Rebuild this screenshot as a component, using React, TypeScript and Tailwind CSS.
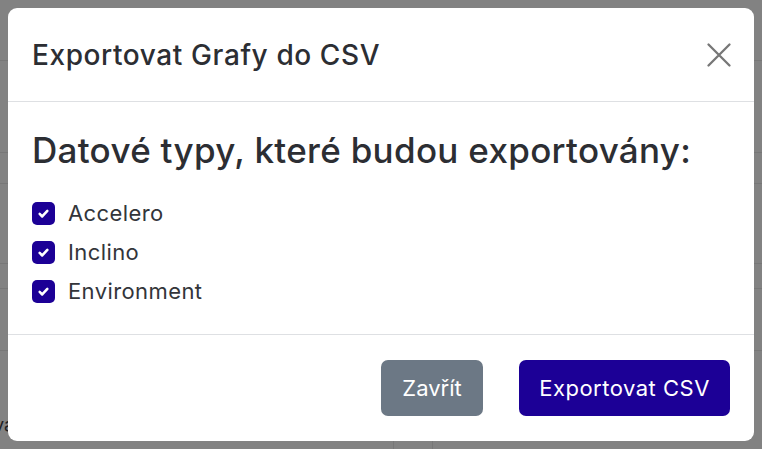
import React, { useState } from 'react';

const types = ['Accelero', 'Inclino', 'Environment'];

function Check({ on }: { on: boolean }) {
  return (
    <span className={`flex h-[23px] w-[23px] items-center justify-center rounded-[5px] ${on ? 'bg-[#1c0096]' : 'border border-gray-400 bg-white'}`}>
      {on && (
        <svg viewBox="0 0 20 20" className="h-[17px] w-[17px]" fill="none" stroke="white" strokeWidth="3" strokeLinecap="round" strokeLinejoin="round">
          <path d="M5.5 10.5l3 3 6-6.5" />
        </svg>
      )}
    </span>
  );
}

export default function App() {
  const [checked, setChecked] = useState<Record<string, boolean>>({ Accelero: true, Inclino: true, Environment: true });

  return (
    <div className="relative h-[449px] w-[762px] overflow-hidden bg-[#828282]" style={{ fontFamily: 'Inter, "Noto Sans", sans-serif' }}>
      {/* page behind the backdrop */}
      <div className="absolute inset-0 pointer-events-none">
        <div className="absolute left-0 right-0 top-[60px] h-px bg-[#777]" />
        <div className="absolute left-0 right-0 top-[152px] h-px bg-[#777]" />
        <div className="absolute left-0 right-0 top-[183px] h-px bg-[#777]" />
        <div className="absolute left-0 right-0 top-[263px] h-px bg-[#777]" />
        <div className="absolute left-0 right-0 top-[288px] h-px bg-[#777]" />
        <div className="absolute left-0 right-0 top-[350px] h-px bg-[#777]" />
        <div className="absolute bottom-0 left-[393px] h-[20px] w-px bg-[#777]" />
        <div className="absolute bottom-0 left-[432px] h-[20px] w-px bg-[#777]" />
        <span className="absolute left-[-6px] top-[411px] text-[18px] text-[#1e1e24]">va</span>
      </div>

      <div className="absolute left-[8px] top-[8px] flex h-[433px] w-[746px] flex-col rounded-[9px] bg-white text-[#2c2e33]">
        <div className="flex h-[94px] items-center justify-between border-b border-[#dee0e3] pl-[24px] pr-[20px]">
          <h2 className="text-[28px] font-medium tracking-[0.6px]">Exportovat Grafy do CSV</h2>
          <button className="flex h-[30px] w-[30px] items-center justify-center text-[#777]">
            <svg viewBox="0 0 24 24" className="h-[28px] w-[28px]" fill="none" stroke="currentColor" strokeWidth="2" strokeLinecap="round">
              <path d="M3 3l18 18M21 3L3 21" />
            </svg>
          </button>
        </div>

        <div className="flex h-[233px] flex-col border-b border-[#dee0e3] px-[24px] pt-[26px]">
          <h3 className="text-[35px] font-medium leading-[44px] tracking-[0.3px]">Datové typy, které budou exportovány:</h3>
          <div className="mt-[30px] flex flex-col gap-[16px]">
            {types.map((t) => (
              <label key={t} className="flex h-[23px] cursor-pointer items-center gap-[13px] text-[22px] tracking-[0.4px] text-[#33353a]" onClick={() => setChecked({ ...checked, [t]: !checked[t] })}>
                <Check on={checked[t]} />
                <span>{t}</span>
              </label>
            ))}
          </div>
        </div>

        <div className="flex flex-1 items-center justify-end gap-[36px] pr-[24px]">
          <button className="h-[56px] w-[102px] rounded-[7px] bg-[#6c7885] text-[22px] text-white">Zavřít</button>
          <button className="h-[56px] w-[211px] rounded-[7px] bg-[#1c0096] text-[22px] tracking-[0.5px] text-white">Exportovat CSV</button>
        </div>
      </div>
    </div>
  );
}
